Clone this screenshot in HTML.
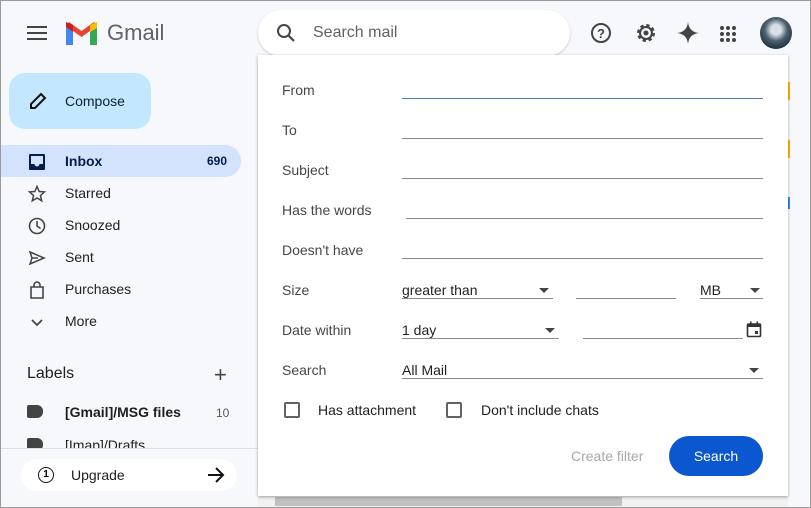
<!DOCTYPE html>
<html><head><style>
*{box-sizing:border-box;margin:0;padding:0}
body{width:811px;height:508px;overflow:hidden;background:#f6f8fc;font-family:"Liberation Sans",Arial,sans-serif;position:relative}
.a{position:absolute}
.nav{left:0;width:241px;height:32px;display:flex;align-items:center;font-size:14px;color:#202124}
.nav .ic{position:absolute;left:28px;top:8px;width:18px;height:18px}
.nav span.t{position:absolute;left:65px}
.lbl{font-size:14px;color:#444746;left:282px}
.ln{height:1px;background:#8a8a8a}
.cb{width:16px;height:16px;border:2px solid #5f6368;border-radius:2px}
</style></head><body>
<svg class="a" style="left:27px;top:26px" width="20" height="14"><rect y="0" width="20" height="2" fill="#444"/><rect y="6" width="20" height="2" fill="#444"/><rect y="12" width="20" height="2" fill="#444"/></svg>
<svg class="a" style="left:66px;top:22px" width="31" height="23" viewBox="0 0 31 23">
<path d="M0 4 L0 23 L7 23 L7 10 Z" fill="#4285f4"/><path d="M24 10 L24 23 L31 23 L31 4 Z" fill="#34a853"/>
<path d="M0 4 L15.5 15 L31 4 L28 0 L15.5 9 L3 0 Z" fill="#ea4335"/><path d="M24 3 L31 0 L31 6 L24 10Z" fill="#fbbc04"/><path d="M0 0 L7 3 L7 10 L0 5Z" fill="#c5221f"/></svg>
<div class="a" style="left:107px;top:20px;font-size:22px;color:#5f6368">Gmail</div>
<div class="a" style="left:258px;top:10px;width:312px;height:46px;background:#fff;border-radius:23px;box-shadow:0 1px 2px rgba(0,0,0,.2)"></div>
<svg class="a" style="left:276px;top:23px" width="20" height="20" viewBox="0 0 20 20"><circle cx="8" cy="8" r="6" fill="none" stroke="#444" stroke-width="2"/><path d="M12.5 12.5 L18 18" stroke="#444" stroke-width="2.2"/></svg>
<div class="a" style="left:313px;top:24px;font-size:16px;color:#5f6368">Search mail</div>
<svg class="a" style="left:590px;top:22px" width="22" height="22" viewBox="0 0 22 22"><circle cx="11" cy="11" r="9" fill="none" stroke="#444" stroke-width="2"/><text x="11" y="16" font-size="13" font-weight="bold" text-anchor="middle" fill="#444" font-family="Liberation Sans">?</text></svg>
<svg class="a" style="left:635px;top:22px" width="22" height="22" viewBox="0 0 22 22"><circle cx="11" cy="11" r="7" fill="none" stroke="#444" stroke-width="4" stroke-dasharray="3 2.5"/><circle cx="11" cy="11" r="6" fill="none" stroke="#444" stroke-width="2"/><circle cx="11" cy="11" r="2.5" fill="#444"/></svg>
<svg class="a" style="left:677px;top:22px" width="22" height="22" viewBox="0 0 22 22"><path d="M11 0 Q12 10 22 11 Q12 12 11 22 Q10 12 0 11 Q10 10 11 0Z" fill="#444"/></svg>
<svg class="a" style="left:719px;top:25px" width="18" height="18" viewBox="0 0 18 18" fill="#444"><circle cx="3" cy="3" r="2"/><circle cx="9" cy="3" r="2"/><circle cx="15" cy="3" r="2"/><circle cx="3" cy="9" r="2"/><circle cx="9" cy="9" r="2"/><circle cx="15" cy="9" r="2"/><circle cx="3" cy="15" r="2"/><circle cx="9" cy="15" r="2"/><circle cx="15" cy="15" r="2"/></svg>
<div class="a" style="left:760px;top:17px;width:32px;height:32px;border-radius:50%;background:radial-gradient(circle at 50% 40%,#d8dfe6 0 20%,#4b6070 45%,#1c2a35 80%)"></div>
<div class="a" style="left:9px;top:73px;width:142px;height:56px;background:#c2e7ff;border-radius:16px"></div>
<svg class="a" style="left:28px;top:91px" width="20" height="20" viewBox="0 0 20 20"><path d="M3 17 L3 13 L13 3 L17 7 L7 17Z" fill="none" stroke="#111" stroke-width="2"/></svg>
<div class="a" style="left:65px;top:93px;font-size:14px;color:#0b1f33">Compose</div>
<div class="a" style="left:0;top:145px;width:241px;height:32px;background:#d3e3fd;border-radius:0 16px 16px 0"></div>
<div class="a nav" style="top:145px;font-weight:bold;color:#041e49"><svg class="ic" viewBox="0 0 18 18"><rect x="1" y="1" width="16" height="16" rx="1" fill="#041e49"/><path d="M3 3h12v8h-3.5a2.5 2.5 0 0 1-5 0H3z" fill="#d3e3fd"/></svg><span class="t">Inbox</span><span style="position:absolute;left:207px;font-size:12px">690</span></div>
<div class="a nav" style="top:177px"><svg class="ic" viewBox="0 0 18 18"><path d="M9 1.5l2.2 5 5.3.4-4 3.6 1.2 5.3L9 13l-4.7 2.8 1.2-5.3-4-3.6 5.3-.4z" fill="none" stroke="#444" stroke-width="1.5"/></svg><span class="t">Starred</span></div>
<div class="a nav" style="top:209px"><svg class="ic" viewBox="0 0 18 18"><circle cx="9" cy="9" r="7.5" fill="none" stroke="#444" stroke-width="1.6"/><path d="M9 4v5l3.5 2.5" fill="none" stroke="#444" stroke-width="1.6"/></svg><span class="t">Snoozed</span></div>
<div class="a nav" style="top:241px"><svg class="ic" viewBox="0 0 18 18"><path d="M2 3 L16 9 L2 15 L4 9Z M4 9H10" fill="none" stroke="#444" stroke-width="1.5"/></svg><span class="t">Sent</span></div>
<div class="a nav" style="top:273px"><svg class="ic" viewBox="0 0 18 18"><path d="M3 6h12v11H3z M6 6V4a3 3 0 0 1 6 0v2" fill="none" stroke="#444" stroke-width="1.6"/></svg><span class="t">Purchases</span></div>
<div class="a nav" style="top:305px"><svg class="ic" viewBox="0 0 18 18"><path d="M4 7 L9 12 L14 7" fill="none" stroke="#444" stroke-width="1.8"/></svg><span class="t">More</span></div>
<div class="a" style="left:27px;top:365px;font-size:16px;color:#1f1f1f">Labels</div>
<div class="a" style="left:214px;top:362px;font-size:22px;color:#444;font-weight:300">+</div>
<div class="a" style="left:27px;top:405px;width:16px;height:13px;background:#444;border-radius:2px 6px 6px 2px"></div>
<div class="a" style="left:65px;top:404px;font-size:14px;font-weight:bold;color:#1f1f1f">[Gmail]/MSG files</div>
<div class="a" style="left:216px;top:406px;font-size:12px;color:#555">10</div>
<div class="a" style="left:27px;top:438px;width:16px;height:13px;background:#444;border-radius:2px 6px 6px 2px"></div>
<div class="a" style="left:65px;top:437px;font-size:14px;color:#1f1f1f">[Imap]/Drafts</div>
<div class="a" style="left:0;top:448px;width:258px;height:60px;background:#f6f8fc;border-top:1px solid #ddd"></div>
<div class="a" style="left:21px;top:459px;width:216px;height:32px;background:#fff;border-radius:16px"></div>
<div class="a" style="left:38px;top:467px;width:16px;height:16px;border:1.6px solid #111;border-radius:50%;font-size:10px;font-weight:bold;text-align:center;line-height:13px">1</div>
<div class="a" style="left:71px;top:467px;font-size:14px;color:#1f1f1f">Upgrade</div>
<svg class="a" style="left:206px;top:465px" width="20" height="20" viewBox="0 0 20 20"><path d="M2 10H17 M10 3 L17 10 L10 17" fill="none" stroke="#111" stroke-width="2"/></svg>
<div class="a" style="left:787px;top:82px;width:3px;height:18px;background:#fbbc04"></div>
<div class="a" style="left:787px;top:140px;width:3px;height:18px;background:#fbbc04"></div>
<div class="a" style="left:787px;top:197px;width:3px;height:12px;background:#4285f4"></div>
<div class="a" style="left:258px;top:496px;width:530px;height:12px;background:#f1f1f1"></div>
<div class="a" style="left:275px;top:497px;width:347px;height:9px;background:#c1c1c1"></div>
<div class="a" style="left:258px;top:55px;width:530px;height:441px;background:#fff;box-shadow:0 1px 3px rgba(0,0,0,.35)"></div>
<div class="a lbl" style="top:82px">From</div><div class="a" style="left:402px;top:98px;width:361px;height:1px;background:#4a7fb5"></div>
<div class="a lbl" style="top:122px">To</div><div class="a ln" style="left:402px;top:138px;width:361px"></div>
<div class="a lbl" style="top:162px">Subject</div><div class="a ln" style="left:402px;top:178px;width:361px"></div>
<div class="a lbl" style="top:202px">Has the words</div><div class="a ln" style="left:406px;top:218px;width:357px"></div>
<div class="a lbl" style="top:242px">Doesn't have</div><div class="a ln" style="left:402px;top:258px;width:361px"></div>
<div class="a lbl" style="top:282px">Size</div>
<div class="a" style="left:402px;top:282px;font-size:14px;color:#1f1f1f">greater than</div>
<div class="a" style="left:539px;top:288px;border:5px solid transparent;border-top-color:#444;border-bottom:0"></div>
<div class="a ln" style="left:402px;top:298px;width:151px"></div>
<div class="a ln" style="left:576px;top:298px;width:100px"></div>
<div class="a" style="left:700px;top:282px;font-size:14px;color:#1f1f1f">MB</div>
<div class="a" style="left:750px;top:288px;border:5px solid transparent;border-top-color:#444;border-bottom:0"></div>
<div class="a ln" style="left:700px;top:298px;width:63px"></div>
<div class="a lbl" style="top:322px">Date within</div>
<div class="a" style="left:402px;top:322px;font-size:14px;color:#1f1f1f">1 day</div>
<div class="a" style="left:545px;top:328px;border:5px solid transparent;border-top-color:#444;border-bottom:0"></div>
<div class="a ln" style="left:402px;top:338px;width:157px"></div>
<div class="a ln" style="left:583px;top:338px;width:160px"></div>
<svg class="a" style="left:746px;top:321px" width="16" height="17" viewBox="0 0 16 17"><rect x="1.5" y="3" width="13" height="12.5" rx="1" fill="none" stroke="#333" stroke-width="1.6"/><rect x="1.5" y="3" width="13" height="3" fill="#333"/><rect x="4" y="0.5" width="1.6" height="3" fill="#333"/><rect x="10.4" y="0.5" width="1.6" height="3" fill="#333"/><rect x="9" y="10" width="3" height="3" fill="#333"/></svg>
<div class="a lbl" style="top:362px">Search</div>
<div class="a" style="left:402px;top:362px;font-size:14px;color:#1f1f1f">All Mail</div>
<div class="a" style="left:749px;top:368px;border:5px solid transparent;border-top-color:#444;border-bottom:0"></div>
<div class="a ln" style="left:402px;top:378px;width:361px"></div>
<div class="a cb" style="left:284px;top:402px"></div>
<div class="a" style="left:318px;top:402px;font-size:14px;color:#1f1f1f">Has attachment</div>
<div class="a cb" style="left:446px;top:402px"></div>
<div class="a" style="left:481px;top:402px;font-size:14px;color:#1f1f1f">Don't include chats</div>
<div class="a" style="left:571px;top:448px;font-size:14px;color:#a8a8a8">Create filter</div>
<div class="a" style="left:669px;top:436px;width:94px;height:40px;background:#0b57d0;border-radius:20px;color:#fff;font-size:14px;text-align:center;line-height:40px">Search</div>
<div class="a" style="left:0;top:0;width:811px;height:508px;border:1px solid #9a9a9a;pointer-events:none"></div>
</body></html>
